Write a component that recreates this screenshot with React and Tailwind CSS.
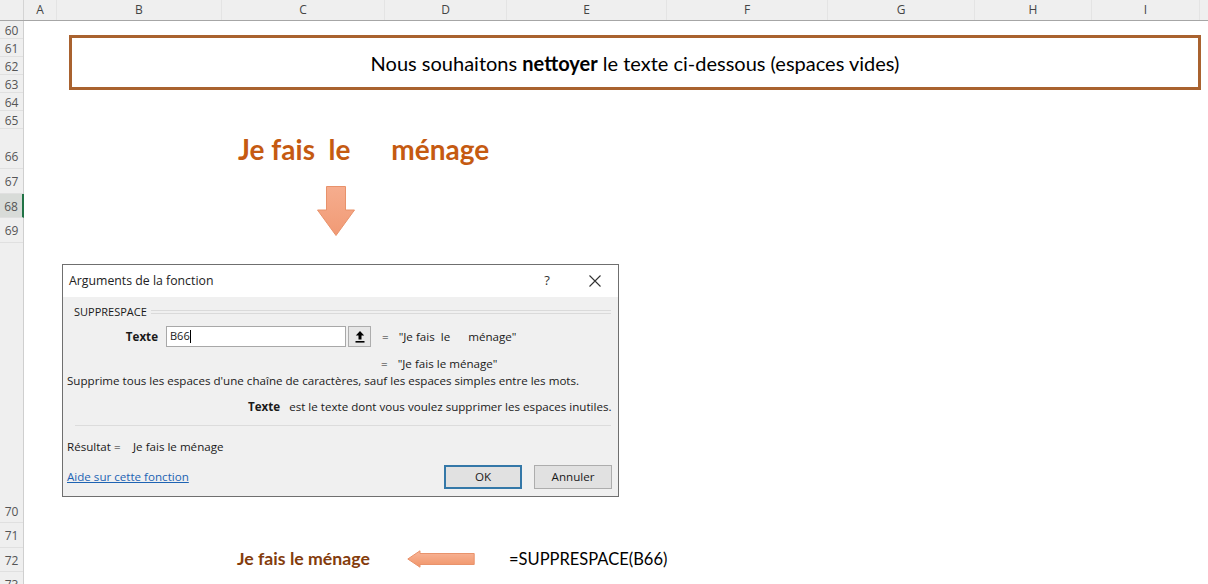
import React from 'react';

// column header widths, measured from the sheet
const cols = [
    { l: 'A', w: 'w-[33px]' },
    { l: 'B', w: 'w-[165px]' },
    { l: 'C', w: 'w-[163px]' },
    { l: 'D', w: 'w-[122px]' },
    { l: 'E', w: 'w-[160px]' },
    { l: 'F', w: 'w-[161px]' },
    { l: 'G', w: 'w-[147px]' },
    { l: 'H', w: 'w-[117px]' },
    { l: 'I', w: 'w-[108px]' },
];

const rows = [
    { n: 60, h: 'h-[18px]' },
    { n: 61, h: 'h-[18px]' },
    { n: 62, h: 'h-[18px]' },
    { n: 63, h: 'h-[18px]' },
    { n: 64, h: 'h-[18px]' },
    { n: 65, h: 'h-[18px]' },
    { n: 66, h: 'h-[40px]', tall: true },
    { n: 67, h: 'h-[25px]' },
    { n: 68, h: 'h-[24px]', sel: true },
    { n: 69, h: 'h-[25px]' },
    { n: null, h: 'h-[256px]' },
    { n: 70, h: 'h-[24px]' },
    { n: 71, h: 'h-[25px]' },
    { n: 72, h: 'h-[24px]' },
    { n: 73, h: 'h-[24px]' },
];

const DownArrow = () => (
    <svg width="38" height="50" viewBox="0 0 38 50">
        <defs>
            <linearGradient id="dg" x1="0" y1="0" x2="0" y2="1">
                <stop offset="0" stopColor="#f6ad8e" />
                <stop offset="1" stopColor="#f19a75" />
            </linearGradient>
        </defs>
        <path d="M9.5 0.5 H28.5 V24 H37.5 L19 49.5 L0.5 24 H9.5 Z" fill="url(#dg)" stroke="#e8926b" strokeWidth="1" />
    </svg>
);

const LeftArrow = () => (
    <svg width="68" height="18" viewBox="0 0 68 18">
        <defs>
            <linearGradient id="lg" x1="0" y1="0" x2="0" y2="1">
                <stop offset="0" stopColor="#f8b699" />
                <stop offset="1" stopColor="#f09468" />
            </linearGradient>
        </defs>
        <path d="M0.8 9 L13 0.8 V3.5 H67.2 V14.5 H13 V17.2 Z" fill="url(#lg)" stroke="#e9936c" strokeWidth="1" />
    </svg>
);

const RefIcon = () => (
    <svg width="10" height="13" viewBox="0 0 10 13">
        <path d="M5 1 L9.2 5.5 H6.5 V9.5 H3.5 V5.5 H0.8 Z" fill="#000" />
        <rect x="0.5" y="11" width="9" height="1.6" fill="#000" />
    </svg>
);

const Dialog = () => (
    <div className="mt-[28px] ml-[38px] w-[557px] h-[233px] flex flex-col border border-[#6f6f6f] bg-[#f0f0f0] text-[11.6px] text-[#1a1a1a] font-['Open_Sans',sans-serif]">
        <div className="h-[32px] bg-white flex items-center pl-[6px]">
            <span className="text-[12.3px] text-[#222]">Arguments de la fonction</span>
            <div className="ml-auto flex items-center">
                <span className="w-[46px] pr-[4px] text-center text-[13px] text-[#333]">?</span>
                <div className="w-[46px] flex justify-center">
                    <svg width="12" height="12" viewBox="0 0 12 12">
                        <path d="M0.5 0.5 L11.5 11.5 M11.5 0.5 L0.5 11.5" stroke="#333" strokeWidth="1.1" />
                    </svg>
                </div>
            </div>
        </div>

        <div className="mt-[8px] h-[14px] flex items-center pl-[11px] pr-[7px]">
            <span className="leading-[14px] text-[11px]">SUPPRESPACE</span>
            <div className="flex-1 ml-[4px] h-[4px] border-t border-b border-[#dadada]" />
        </div>

        <div className="mt-[7px] h-[21px] flex items-center">
            <span className="w-[95px] text-right font-bold">Texte</span>
            <div className="ml-[8px] w-[180px] h-[21px] bg-white border border-[#a8a8a8] flex items-center pl-[3px]">
                <span className="text-[11px]">B66</span>
                <span className="w-px h-[13px] bg-black" />
            </div>
            <div className="ml-[2px] w-[23px] h-[21px] border border-[#adadad] bg-[#e6e6e6] flex items-center justify-center">
                <RefIcon />
            </div>
            <span className="ml-[11px]">=</span>
            <span className="ml-[10px] whitespace-pre">"Je fais  le      ménage"</span>
        </div>

        <div className="mt-[9px] h-[16px] flex items-center pl-[318px]">
            <span>=</span>
            <span className="ml-[10px]">"Je fais le ménage"</span>
        </div>

        <div className="mt-[2px] h-[14px] flex items-center pl-[4px] whitespace-nowrap">
            Supprime tous les espaces d'une chaîne de caractères, sauf les espaces simples entre les mots.
        </div>

        <div className="mt-[12px] h-[14px] flex items-center pl-[185px] whitespace-nowrap">
            <span className="font-bold">Texte</span>
            <span className="ml-[9px]">est le texte dont vous voulez supprimer les espaces inutiles.</span>
        </div>

        <div className="mt-[11px] ml-[12px] mr-[7px] border-t border-[#dcdcdc]" />

        <div className="mt-[14px] h-[14px] flex items-center pl-[4px]">
            <span className="w-[66px]">Résultat =</span>
            <span>Je fais le ménage</span>
        </div>

        <div className="mt-[11px] h-[24px] flex items-center pl-[4px] pr-[6px]">
            <span className="text-[#1d63b3] underline">Aide sur cette fonction</span>
            <div className="ml-auto flex gap-[12px]">
                <div className="w-[78px] h-[24px] border-2 border-[#3478a8] bg-[#e1e1e1] flex items-center justify-center">OK</div>
                <div className="w-[78px] h-[24px] border border-[#adadad] bg-[#e1e1e1] flex items-center justify-center">Annuler</div>
            </div>
        </div>
    </div>
);

const App = () => {
    return (
        <div className="w-[1208px] h-[584px] overflow-hidden bg-white flex flex-col">
            {/* column header */}
            <div className="h-[21px] shrink-0 flex bg-[#efefef] border-b border-[#a6a6a6] text-[12px] text-[#444] font-['Open_Sans',sans-serif]">
                <div className="w-[24px] border-r border-[#d4d4d4]" />
                {cols.map((c) => (
                    <div key={c.l} className={`${c.w} flex items-center justify-center border-r border-[#e4e4e4]`}>
                        {c.l}
                    </div>
                ))}
                <div className="flex-1" />
            </div>

            <div className="flex-1 flex">
                {/* row numbers */}
                <div className="w-[24px] flex flex-col bg-[#efefef] border-r border-[#cfcfcf] text-[12px] text-[#555] font-['Open_Sans',sans-serif]">
                    {rows.map((r, i) => (
                        <div
                            key={i}
                            className={`${r.h} shrink-0 flex justify-center ${r.tall ? 'items-end pb-[2px]' : 'items-center pt-[2px]'} ${
                                r.n ? 'border-b border-[#e0e0e0]' : ''
                            } ${r.sel ? 'bg-[#d8dbd8] border-r-2 border-r-[#217346] mr-[-1px]' : ''}`}
                        >
                            {r.n}
                        </div>
                    ))}
                </div>

                {/* sheet content */}
                <div className="flex-1 flex flex-col font-['Lato',sans-serif]">
                    <div className="mt-[14px] ml-[45px] w-[1132px] h-[55px] border-[3px] border-[#a9622f] flex items-center justify-center">
                        <span className="text-[20px] text-black">
                            Nous souhaitons <b>nettoyer</b> le texte ci-dessous (espaces vides)
                        </span>
                    </div>

                    <div className="mt-[44px] ml-[214px] h-[30px] flex items-center">
                        <span className="text-[28px] font-bold text-[#c55a11] whitespace-pre">Je fais  le      ménage</span>
                    </div>

                    <div className="mt-[22px] ml-[293px] flex">
                        <DownArrow />
                    </div>

                    <Dialog />

                    <div className="mt-[50px] h-[24px] flex items-center">
                        <span className="ml-[213px] w-[170px] text-[17.7px] font-bold text-[#843c0c]">Je fais le ménage</span>
                        <LeftArrow />
                        <span className="ml-[34px] text-[16.5px] text-black">=SUPPRESPACE(B66)</span>
                    </div>
                </div>
            </div>
        </div>
    );
};

export default App;
